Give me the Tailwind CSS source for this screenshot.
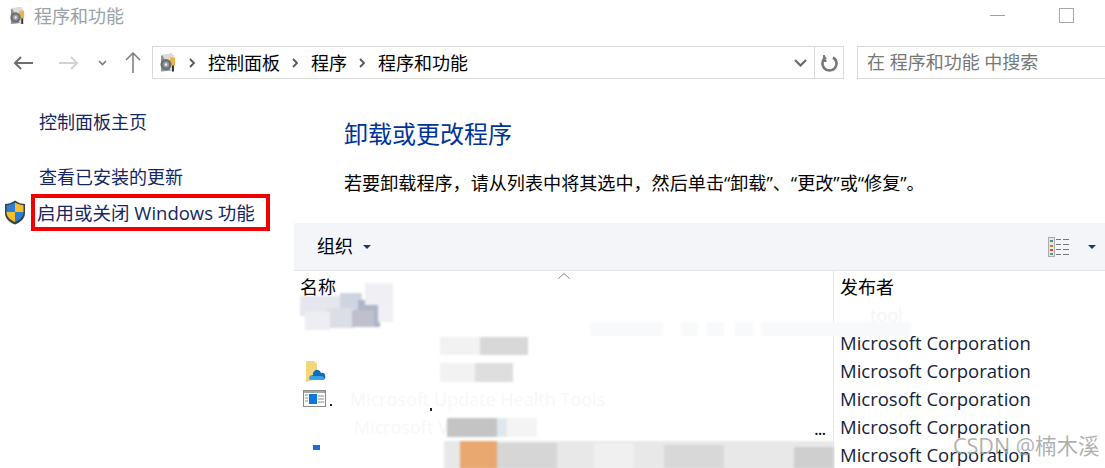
<!DOCTYPE html>
<html lang="zh-CN">
<head>
    <meta charset="UTF-8">
    <title>程序和功能</title>
    <script src="https://cdn.jsdelivr.net/npm/@tailwindcss/browser@4"></script>
</head>
<body class="bg-white w-[1105px] h-[468px] overflow-hidden font-['Open_Sans','Noto_Sans_CJK_SC',sans-serif] text-black">
    <!-- title bar -->
    <div class="h-[46px] flex items-start">
        <svg class="ml-[9px] mt-[5px] w-[17px] h-[21px]" viewBox="0 0 18 20">
            <path d="M2 3l11-2v17l-11 1z" fill="#8d9296"/>
            <path d="M3 2l9-1 3 2v15l-3 1z" fill="#dcdcd4"/>
            <rect x="11" y="5" width="5" height="8" fill="#f2b04a"/>
            <circle cx="7" cy="12" r="5.500" fill="#6a6f74"/>
            <circle cx="7" cy="12" r="3" fill="#9a9fa4"/>
            <circle cx="7" cy="12" r="1.200" fill="#eeeeee"/>
            <rect x="13" y="13" width="2" height="6" fill="#30353a"/>
        </svg>
        <span class="ml-[8px] mt-[3px] text-[18px] leading-[26px] text-[#99a0a8]">程序和功能</span>
        <div class="ml-auto mt-[15px] w-[15px] h-px bg-[#a0a0a0] mr-[54px]"></div>
        <div class="mt-[8px] w-[15px] h-[15px] border border-[#a8a8a8] mr-[31px]"></div>
    </div>

    <!-- nav bar -->
    <div class="h-[33px] flex items-center">
        <svg class="ml-[13px] w-[20px] h-[16px]" viewBox="0 0 20 16" fill="none" stroke="#6e6e6e" stroke-width="2">
            <path d="M20 8H2M8 2L2 8l6 6"/>
        </svg>
        <svg class="ml-[26px] w-[20px] h-[16px]" viewBox="0 0 20 16" fill="none" stroke="#d4d4d4" stroke-width="2">
            <path d="M0 8h18M12 2l6 6-6 6"/>
        </svg>
        <svg class="ml-[19px] w-[9px] h-[6px]" viewBox="0 0 9 6" fill="none" stroke="#7a7a7a" stroke-width="1.600">
            <path d="M1 1l3.500 3.500L8 1"/>
        </svg>
        <svg class="ml-[18px] w-[16px] h-[21px]" viewBox="0 0 16 21" fill="none" stroke="#7c7c7c" stroke-width="1.500">
            <path d="M8 21V1M1 8l7-7 7 7"/>
        </svg>
        <div class="ml-[11px] w-[692px] h-[33px] border border-[#d9d9d9] flex items-center">
            <svg class="ml-[6px] w-[18px] h-[21px]" viewBox="0 0 18 20">
                <path d="M2 3l11-2v17l-11 1z" fill="#8d9296"/>
                <path d="M3 2l9-1 3 2v15l-3 1z" fill="#dcdcd4"/>
                <rect x="11" y="5" width="5" height="8" fill="#f2b04a"/>
                <circle cx="7" cy="12" r="5.500" fill="#6a6f74"/>
                <circle cx="7" cy="12" r="3" fill="#9a9fa4"/>
                <circle cx="7" cy="12" r="1.200" fill="#eeeeee"/>
                <rect x="13" y="13" width="2" height="6" fill="#30353a"/>
            </svg>
            <svg class="ml-[12px] w-[6px] h-[10px]" viewBox="0 0 6 10" fill="none" stroke="#555" stroke-width="1.800"><path d="M1 1l4 4-4 4"/></svg>
            <span class="ml-[13px] text-[18px] leading-none">控制面板</span>
            <svg class="ml-[12px] w-[6px] h-[10px]" viewBox="0 0 6 10" fill="none" stroke="#555" stroke-width="1.800"><path d="M1 1l4 4-4 4"/></svg>
            <span class="ml-[13px] text-[18px] leading-none">程序</span>
            <svg class="ml-[12px] w-[6px] h-[10px]" viewBox="0 0 6 10" fill="none" stroke="#555" stroke-width="1.800"><path d="M1 1l4 4-4 4"/></svg>
            <span class="ml-[13px] text-[18px] leading-none">程序和功能</span>
            <svg class="ml-auto mr-[7px] w-[13px] h-[8px]" viewBox="0 0 13 8" fill="none" stroke="#6a6a6a" stroke-width="2.200"><path d="M1 1l5.500 5.500L12 1"/></svg>
            <div class="w-[29px] h-full border-l border-[#d9d9d9] flex items-center justify-center">
                <svg class="w-[17px] h-[18px]" viewBox="0 0 17 18" fill="none" stroke="#777" stroke-width="2.600">
                    <path d="M5 3.500a7 7 0 1 0 7 0"/>
                    <path d="M3 1v6h2.500" stroke-width="2"/>
                </svg>
            </div>
        </div>
        <div class="ml-[13px] flex-1 h-[33px] border border-[#d9d9d9] border-r-0 flex items-center pl-[9px] text-[18px] text-[#777]">在 程序和功能 中搜索</div>
    </div>

    <!-- main -->
    <div class="flex h-[389px]">
        <aside class="w-[294px] shrink-0 relative text-[#15265f] text-[18px] leading-[24px]">
            <div class="ml-[39px] mt-[31px]">控制面板主页</div>
            <div class="ml-[39px] mt-[31px]">查看已安装的更新</div>
            <div class="flex items-center mt-[5px] ml-[4px]">
                <svg class="w-[22px] h-[25px]" viewBox="0 0 22 25">
                    <path d="M11 0.500C8 3 4 4 1 4v9c0 6 5 9.500 10 11.500 5-2 10-5.500 10-11.500V4c-3 0-7-1-10-3.500z" fill="#3a4048"/>
                    <path d="M11 2.500C9 4 5 5 2.500 5.300V12H11z" fill="#2a7fd4"/>
                    <path d="M11 2.500c2 1.500 6 2.500 8.500 2.800V12H11z" fill="#f6c02c"/>
                    <path d="M2.500 12c0 5 4 8 8.500 10V12z" fill="#f6c02c"/>
                    <path d="M19.500 12c0 5-4 8-8.500 10V12z" fill="#2a7fd4"/>
                </svg>
                <div class="ml-[5px] w-[239px] h-[37px] border-[4px] border-[#f00000] flex items-center pl-[2px] whitespace-nowrap text-[18.500px]">启用或关闭 Windows 功能</div>
            </div>
        </aside>

        <main class="flex-1 min-w-0">
            <h1 class="ml-[50px] mt-[39px] text-[24px] leading-[32px] text-[#003399]">卸载或更改程序</h1>
            <p class="ml-[50px] mt-[20px] text-[18.100px] leading-[26px] whitespace-nowrap">若要卸载程序，请从列表中将其选中，然后单击“卸载”、“更改”或“修复”。</p>

            <div class="mt-[27px] h-[48px] bg-[#f3f5f8] border-b border-[#e2e4e8] flex items-center">
                <span class="ml-[23px] text-[18px]">组织</span>
                <span class="ml-[10px] w-0 h-0 border-x-[4px] border-x-transparent border-t-[4px] border-t-[#1f3a5f]"></span>
                <svg class="ml-auto w-[22px] h-[20px]" viewBox="0 0 22 20">
                    <rect x="0.500" y="0.500" width="6" height="19" fill="#e8e8e8" stroke="#aaa"/>
                    <rect x="2" y="3" width="3" height="2" fill="#4a8a8a"/>
                    <rect x="2" y="8" width="3" height="2" fill="#a08a3a"/>
                    <rect x="2" y="12" width="3" height="2" fill="#c8502a"/>
                    <rect x="2" y="16" width="3" height="2" fill="#5a9a7a"/>
                    <path d="M8 2.500h5M15 2.500h6M8 7.500h5M15 7.500h6M8 12.500h5M15 12.500h6M8 17.500h5M15 17.500h6" stroke="#777"/>
                </svg>
                <span class="ml-[18px] mr-[9px] w-0 h-0 border-x-[4px] border-x-transparent border-t-[4px] border-t-[#1f3a5f]"></span>
            </div>

            <!-- list -->
            <div class="relative flex h-[198px] overflow-hidden">
                <div class="w-[540px] shrink-0 border-r border-[#e6e8ec] relative">
                    <div class="pl-[6px] h-[31px] text-[18px] leading-[33px]">名称</div>
                    <svg class="absolute left-[264px] top-[2px] w-[12px] h-[6px]" viewBox="0 0 12 6" fill="none" stroke="#8a8a8a"><path d="M0.500 5.500L6 0.500l5.500 5"/></svg>
                    <div class="flex flex-col pt-[27px] pl-[11px]">
                        <div class="h-[28px]"></div>
                        <div class="h-[28px] flex items-center">
                            <svg class="w-[21px] h-[23px]" viewBox="0 0 21 23">
                                <path d="M1 1h8l3 3v15l-11 3z" fill="#f3d67a"/>
                                <path d="M8 15a4 4 0 0 1 8-2 3.500 3.500 0 0 1 1.500 7H6a3 3 0 0 1 2-5z" fill="#0f6cbd"/>
                                <path d="M5 20a2.500 2.500 0 0 1 3-4h8a3 3 0 0 1 3 4z" fill="#3aa0e8"/>
                            </svg>
                        </div>
                        <div class="h-[28px] flex items-center -ml-[2px]">
                            <svg class="w-[23px] h-[18px]" viewBox="0 0 23 18">
                                <rect x="0.500" y="0.500" width="22" height="16" fill="#fff" stroke="#8a8a8a"/>
                                <rect x="1" y="1" width="21" height="2" fill="#a8a8a8"/>
                                <rect x="6" y="4" width="8" height="10" fill="#0a78e0"/>
                                <path d="M2 5h3M2 8h3M2 11h3M15 6h6M15 9h6M15 12h6" stroke="#8a8a8a"/>
                            </svg>
                        </div>
                    </div>
                    <span class="absolute left-[520px] top-[148px] text-[18px] leading-[18px] tracking-[-1px]">...</span>
                </div>
                <div class="flex-1 pl-[6px]">
                    <div class="h-[31px] text-[18px] leading-[33px]">发布者</div>
                    <div class="pt-[27px] text-[18.500px] text-[#14233c] whitespace-nowrap">
                        <div class="h-[28px] leading-[28px]">Microsoft Corporation</div>
                        <div class="h-[28px] leading-[28px]">Microsoft Corporation</div>
                        <div class="h-[28px] leading-[28px]">Microsoft Corporation</div>
                        <div class="h-[28px] leading-[28px]">Microsoft Corporation</div>
                        <div class="h-[28px] leading-[28px]">Microsoft Corporation</div>
                    </div>
                </div>

                <!-- faint leftovers of the blanked row text -->
                <span class="absolute left-[56px] top-[114px] text-[18px] leading-[28px] text-[#f8f8f8] whitespace-nowrap">Microsoft Update Health Tools</span>
                <span class="absolute left-[60px] top-[142px] text-[18px] leading-[28px] text-[#f8f8f8] whitespace-nowrap">Microsoft Visual</span>
                <span class="absolute left-[576px] top-[30px] text-[18px] leading-[28px] text-[#f6f6f6] whitespace-nowrap">tool</span>

                <!-- mosaic smudges over the blanked rows -->
                <div class="absolute inset-0 blur-[1px]">
                    <div class="absolute left-[6px] top-[25px] w-[40px] h-[20px] bg-[#e6e6ee]"></div>
                    <div class="absolute left-[46px] top-[22px] w-[22px] h-[17px] bg-[#d0d4e2]"></div>
                    <div class="absolute left-[64px] top-[29px] w-[22px] h-[27px] bg-[#b0b4c8]"></div>
                    <div class="absolute left-[33px] top-[37px] w-[27px] h-[20px] bg-[#dcdee6]"></div>
                    <div class="absolute left-[11px] top-[41px] w-[25px] h-[18px] bg-[#eeeef2]"></div>
                    <div class="absolute left-[58px] top-[39px] w-[22px] h-[17px] bg-[#bfbfcd]"></div>
                    <div class="absolute left-[84px] top-[34px] w-[15px] h-[17px] bg-[#f0f0f5]"></div>
                    <div class="absolute left-[71px] top-[12px] w-[28px] h-[22px] bg-[#f0f0f4]"></div>

                    <div class="absolute left-[296px] top-[51px] w-[73px] h-[14px] bg-[#f8f9fb]"></div>
                    <div class="absolute left-[387px] top-[51px] w-[17px] h-[14px] bg-[#f8f9fb]"></div>
                    <div class="absolute left-[413px] top-[51px] w-[17px] h-[14px] bg-[#f8f9fb]"></div>
                    <div class="absolute left-[441px] top-[51px] w-[18px] h-[14px] bg-[#f8f9fb]"></div>
                    <div class="absolute left-[467px] top-[51px] w-[150px] h-[14px] bg-[#f8f9fb]"></div>

                    <div class="absolute left-[146px] top-[66px] w-[40px] h-[18px] bg-[#f2f2f2]"></div>
                    <div class="absolute left-[186px] top-[66px] w-[48px] h-[18px] bg-[#d8d8d8]"></div>
                    <div class="absolute left-[146px] top-[92px] w-[35px] h-[19px] bg-[#f2f2f2]"></div>
                    <div class="absolute left-[181px] top-[92px] w-[38px] h-[19px] bg-[#dedede]"></div>

                    <div class="absolute left-[153px] top-[147px] w-[50px] h-[19px] bg-[#c4c4c4]"></div>
                    <div class="absolute left-[203px] top-[147px] w-[10px] h-[19px] bg-[#e0e8ee]"></div>
                    <div class="absolute left-[213px] top-[147px] w-[30px] h-[19px] bg-[#f4f4f4]"></div>

                    <div class="absolute left-[150px] top-[170px] w-[390px] h-[28px] bg-[#e8e8e8]"></div>
                    <div class="absolute left-[166px] top-[170px] w-[37px] h-[28px] bg-[#e8a870]"></div>
                    <div class="absolute left-[203px] top-[172px] w-[60px] h-[26px] bg-[#d6d6d6]"></div>
                    <div class="absolute left-[300px] top-[172px] w-[40px] h-[26px] bg-[#f0f0f0]"></div>
                    <div class="absolute left-[370px] top-[174px] w-[60px] h-[24px] bg-[#d8d8d8]"></div>
                    <div class="absolute left-[500px] top-[176px] w-[40px] h-[22px] bg-[#cfcfcf]"></div>
                </div>

                <!-- specks left by the mosaic -->
                <div class="absolute left-[19px] top-[174px] w-[7px] h-[5px] bg-[#1f6fd0]"></div>
                <div class="absolute left-[36px] top-[133px] w-[2px] h-[2px] bg-[#222]"></div>
                <div class="absolute left-[136px] top-[137px] w-[2px] h-[3px] bg-[#223]"></div>

                <!-- watermark -->
                <span class="absolute left-[659px] top-[161px] text-[21.500px] leading-[28px] text-[#9a9a9a]/80 whitespace-nowrap">CSDN @楠木溪</span>
            </div>
        </main>
    </div>
</body>
</html>
